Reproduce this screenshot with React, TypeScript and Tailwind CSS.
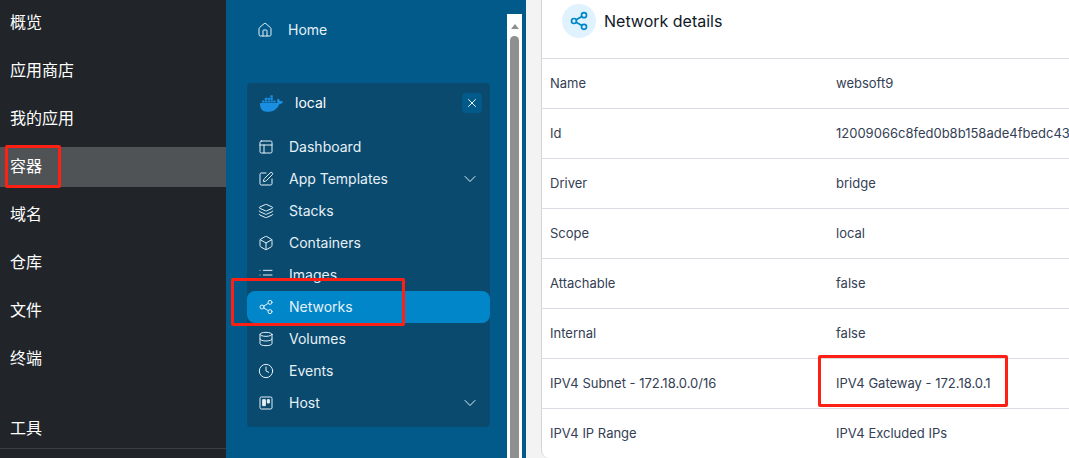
import { Box, ChevronDown, Clock, Database, Home, Layers, Layout, List, Share2, SquarePen, X } from 'lucide-react'
import type { ComponentType } from 'react'
import { SiDocker } from 'react-icons/si'

type IconProps = { className?: string; strokeWidth?: number }

const mainMenu = ['概览', '应用商店', '我的应用', '容器', '域名', '仓库', '文件', '终端']

const envMenu: { label: string; icon: ComponentType<IconProps>; active?: boolean; more?: boolean }[] = [
  { label: 'Dashboard', icon: Layout },
  { label: 'App Templates', icon: SquarePen, more: true },
  { label: 'Stacks', icon: Layers },
  { label: 'Containers', icon: Box },
  { label: 'Images', icon: List },
  { label: 'Networks', icon: Share2, active: true },
  { label: 'Volumes', icon: Database },
  { label: 'Events', icon: Clock },
  { label: 'Host', icon: HostIcon, more: true },
]

const details = [
  ['Name', 'websoft9'],
  ['Id', '12009066c8fed0b8b158ade4fbedc43'],
  ['Driver', 'bridge'],
  ['Scope', 'local'],
  ['Attachable', 'false'],
  ['Internal', 'false'],
  ['IPV4 Subnet - 172.18.0.0/16', 'IPV4 Gateway - 172.18.0.1'],
  ['IPV4 IP Range', 'IPV4 Excluded IPs'],
]

export default function App() {
  return (
    <div className="relative flex h-[458px] w-[1069px] overflow-hidden bg-[#f3f3f3] font-['Inter',sans-serif]">
      <MainSidebar />
      <PortainerSidebar />
      <NetworkCard />
      {/* red annotation boxes */}
      <div className="absolute left-[5px] top-[145px] h-[43px] w-[56px] rounded-[2px] border-[3px] border-[#ff2015]" />
      <div className="absolute left-[231px] top-[278px] h-[48px] w-[174px] rounded-[2px] border-[3px] border-[#ff2015]" />
      <div className="absolute left-[818px] top-[355px] h-[52px] w-[190px] rounded-[2px] border-[3px] border-[#ff2015]" />
    </div>
  )
}

function HostIcon({ className, strokeWidth = 1.5 }: IconProps) {
  return (
    <svg viewBox="0 0 24 24" fill="none" stroke="currentColor" strokeWidth={strokeWidth} strokeLinejoin="round" className={className}>
      <rect x="3" y="3" width="18" height="18" rx="2" />
      <rect x="7" y="7" width="4" height="9" fill="currentColor" />
      <rect x="14" y="7" width="3" height="5" fill="currentColor" />
    </svg>
  )
}

function MainSidebar() {
  return (
    <aside className="flex w-[226px] shrink-0 flex-col bg-[#212529] pt-[3px] font-['Noto_Sans_CJK_SC','Liberation_Sans',sans-serif] text-base text-white">
      {mainMenu.map((item, i) => (
        <div key={item} className={`mb-2 flex h-10 shrink-0 items-center pb-[5px] pl-[10px] ${i === 3 ? 'bg-[#505356]' : ''}`}>
          {item}
        </div>
      ))}
      <div className="mt-[22px] flex h-10 shrink-0 items-center border-b border-[#3a3d41] pb-[3px] pl-[10px]">工具</div>
    </aside>
  )
}

function PortainerSidebar() {
  return (
    <aside className="flex w-[300px] shrink-0 bg-[#025a8b]">
      <div className="w-[281px] shrink-0 pl-[21px] pr-[17px] pt-[14px] text-sm text-[#e6f1f7]">
        <div className="flex h-8 items-center">
          <Home className="ml-[10px] mr-[15px] h-4 w-4" strokeWidth={1.5} />
          <span>Home</span>
        </div>
        <div className="mt-[37px] h-[344px] rounded-[4px] bg-[#0a4a6e]">
          <div className="flex h-[48px] items-center pb-[8px] pl-[13px] pr-[8px]">
            <SiDocker className="h-[23px] w-[23px] text-[#1a8ee0]" />
            <span className="ml-[12px] text-white">local</span>
            <div className="ml-auto flex h-5 w-5 items-center justify-center rounded-[4px] bg-[#025a8b]">
              <X className="h-[14px] w-[14px] text-white" strokeWidth={1.6} />
            </div>
          </div>
          <div>
            {envMenu.map(({ label, icon: Icon, active, more }) => (
              <div key={label} className={`flex h-8 items-center rounded-lg pl-[11px] pr-[10px] ${active ? 'bg-[#0086c9]' : ''}`}>
                <Icon className="mr-[15px] h-4 w-4 shrink-0" strokeWidth={1.5} />
                <span>{label}</span>
                {more && <ChevronDown className="ml-auto h-5 w-5" strokeWidth={1.2} />}
              </div>
            ))}
          </div>
        </div>
      </div>
      <div className="mt-[14px] flex h-[444px] w-[15px] shrink-0 flex-col items-center bg-white pt-[10px]">
        <div className="h-0 w-0 border-x-4 border-b-[5px] border-x-transparent border-b-[#8f8f8f]" />
        <div className="mt-[7px] w-[9px] flex-1 rounded-t-[5px] bg-[#8f8f8f]" />
      </div>
    </aside>
  )
}

function NetworkCard() {
  return (
    <main className="ml-[15px] flex-1 overflow-hidden rounded-bl-lg border-l border-[#d0d5dd] bg-white text-[13px] text-[#344054]">
      <div className="flex h-[59px] items-start border-b border-[#d9dde3] pl-[20px] pt-[4px]">
        <div className="flex h-[34px] w-[34px] items-center justify-center rounded-full bg-[#e0f2fe]">
          <Share2 className="h-5 w-5 text-[#0086c9]" strokeWidth={2} />
        </div>
        <span className="ml-2 mt-[5px] text-base text-[#101828]">Network details</span>
      </div>
      {details.map(([name, value]) => (
        <div key={name} className="flex h-[50px] items-center border-b border-[#d9dde3] pl-2 last:border-b-0">
          <span className="w-[286px] shrink-0">{name}</span>
          <span className="whitespace-nowrap">{value}</span>
        </div>
      ))}
    </main>
  )
}
